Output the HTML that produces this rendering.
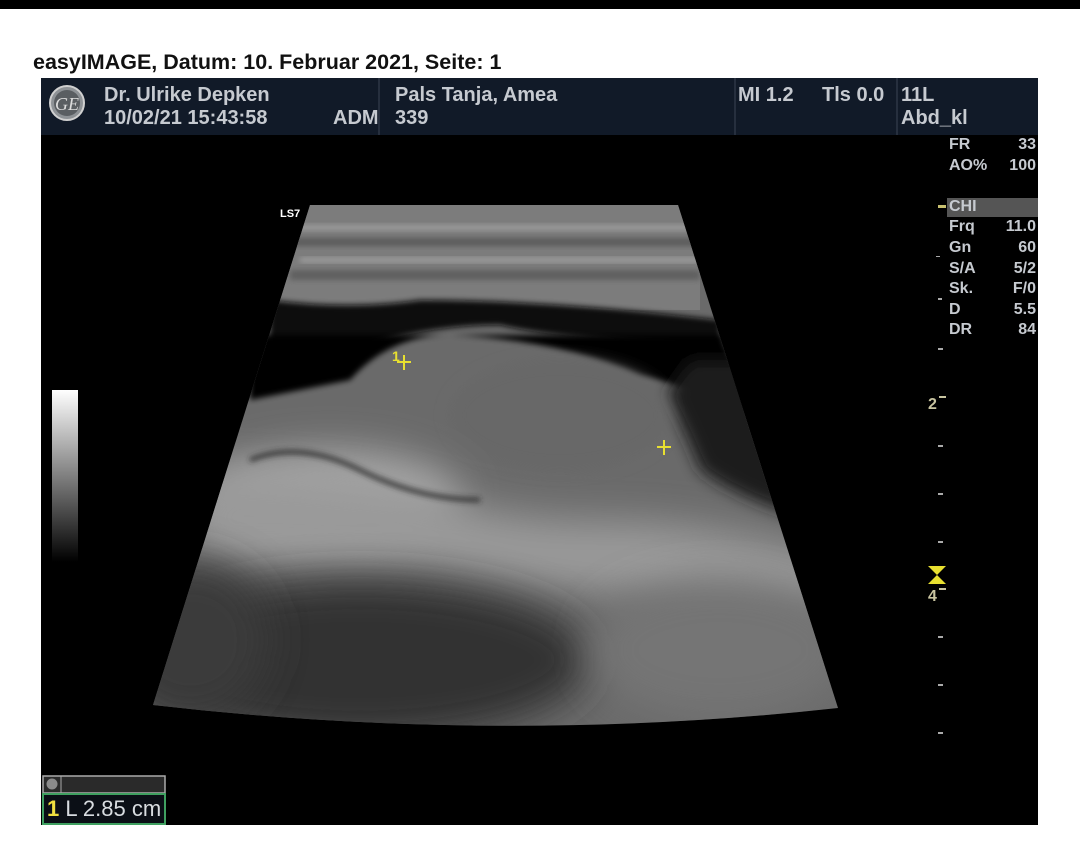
<!DOCTYPE html>
<html><head><meta charset="utf-8"><style>
html,body{margin:0;padding:0;background:#fff;}
body{width:1080px;height:854px;position:relative;overflow:hidden;font-family:"Liberation Sans",Arial,sans-serif;}
.t{position:absolute;white-space:nowrap;}
.h{font-size:20px;font-weight:bold;color:#c6cad0;line-height:23px}
</style></head><body>
<div style="position:absolute;left:0;top:0;width:1080px;height:9px;background:#000"></div>
<div class="t" style="left:33px;top:50px;font-size:21.5px;font-weight:bold;color:#111">easyIMAGE, Datum: 10. Februar 2021, Seite: 1</div>
<svg style="position:absolute;left:0;top:0" width="1080" height="854" xmlns="http://www.w3.org/2000/svg">
<defs>
<clipPath id="fan"><path d="M310,205 L678,205 L838,708 Q500,745 153,705 Z"/></clipPath>
<filter id="b8" x="-50%" y="-50%" width="200%" height="200%"><feGaussianBlur stdDeviation="8"/></filter>
<filter id="b3" x="-50%" y="-50%" width="200%" height="200%"><feGaussianBlur stdDeviation="3"/></filter>
<filter id="b20" x="-50%" y="-50%" width="200%" height="200%"><feGaussianBlur stdDeviation="20"/></filter>
<linearGradient id="gbar" x1="0" y1="0" x2="0" y2="1"><stop offset="0" stop-color="#fff"/><stop offset="1" stop-color="#000"/></linearGradient>
</defs>
<rect x="41" y="78" width="997" height="747" fill="#000"/>
<rect x="41" y="78" width="997" height="57" fill="#111a28"/>
<line x1="379" y1="78" x2="379" y2="135" stroke="#3a4454"/>
<line x1="735" y1="78" x2="735" y2="135" stroke="#3a4454"/>
<line x1="897" y1="78" x2="897" y2="135" stroke="#3a4454"/>
<circle cx="67" cy="103" r="17" fill="#8e9296" stroke="#d0d0d0" stroke-width="2"/>
<circle cx="67" cy="103" r="13" fill="#5a5e62"/>
<text x="67" y="110" font-family="Liberation Serif" font-style="italic" font-size="18" fill="#ddd" text-anchor="middle">GE</text>
<rect x="52" y="390" width="26" height="172" fill="url(#gbar)"/>
<g clip-path="url(#fan)">
<rect x="140" y="200" width="710" height="550" fill="#6a6a6a"/>
<rect x="280" y="200" width="420" height="110" fill="#7c7c7c"/>
<rect x="290" y="238" width="410" height="8" fill="#5a5a5a" filter="url(#b3)"/>
<rect x="290" y="270" width="410" height="10" fill="#5e5e5e" filter="url(#b3)"/>
<rect x="290" y="225" width="410" height="5" fill="#a0a0a0" filter="url(#b3)"/>
<rect x="300" y="258" width="400" height="4" fill="#a8a8a8" filter="url(#b3)"/>
<path d="M270,300 Q350,310 420,300 Q550,300 720,320 L720,345 Q560,340 500,325 Q400,325 300,370 L270,370Z" fill="#080808" filter="url(#b3)"/>
<path d="M250,335 L720,335 L760,420 Q700,390 640,375 Q560,340 450,335 Q390,335 350,380 L250,400Z" fill="#050505" filter="url(#b3)"/>
<path d="M690,360 L760,360 L810,520 Q740,500 700,470 Q680,420 665,395Z" fill="#1a1a1a" filter="url(#b8)"/>
<ellipse cx="560" cy="415" rx="110" ry="55" fill="#686868" filter="url(#b8)"/>
<ellipse cx="330" cy="500" rx="130" ry="50" fill="#a8a8a8" filter="url(#b20)"/>
<path d="M200,470 Q300,470 420,490 Q500,520 600,520 Q720,520 840,560 L840,610 Q600,600 420,570 Q300,560 180,560Z" fill="#9a9a9a" filter="url(#b20)"/>
<ellipse cx="360" cy="660" rx="230" ry="80" fill="#303030" filter="url(#b20)"/>
<ellipse cx="190" cy="640" rx="80" ry="80" fill="#3a3a3a" filter="url(#b20)"/>
<ellipse cx="720" cy="650" rx="130" ry="70" fill="#747474" filter="url(#b20)"/>
<path d="M250,460 Q300,440 360,470 Q420,500 480,500" stroke="#2a2a2a" stroke-width="4" fill="none" filter="url(#b3)"/>
</g>
<text x="280" y="217" font-size="11" font-weight="bold" fill="#fff">LS7</text>
<g stroke="#e8e030" stroke-width="2"><line x1="404" y1="355" x2="404" y2="370"/><line x1="397" y1="362" x2="411" y2="362"/><line x1="664" y1="440" x2="664" y2="455"/><line x1="657" y1="447" x2="671" y2="447"/></g>
<text x="392" y="361" font-size="14" font-weight="bold" fill="#e8e030">1</text>
<rect x="947" y="198" width="91" height="19" fill="#555"/>
<g fill="#aaa"><rect x="938" y="205" width="8" height="3" fill="#c8c070"/><rect x="936" y="256" width="4" height="1"/><rect x="938" y="298" width="4" height="2"/><rect x="938" y="348" width="5" height="2"/><rect x="938" y="445" width="5" height="2"/><rect x="938" y="493" width="5" height="2"/><rect x="938" y="541" width="5" height="2"/><rect x="938" y="636" width="5" height="2"/><rect x="938" y="684" width="5" height="2"/><rect x="938" y="732" width="5" height="2"/></g>
<text x="928" y="409" font-size="16" font-weight="bold" fill="#c8c4a0">2</text><rect x="939" y="396" width="7" height="2" fill="#c8c4a0"/>
<text x="928" y="601" font-size="16" font-weight="bold" fill="#c8c4a0">4</text><rect x="939" y="588" width="7" height="2" fill="#c8c4a0"/>
<path d="M928,566 L946,566 L937,575 Z M928,584 L946,584 L937,575 Z" fill="#e8e030"/>
<rect x="43" y="776" width="122" height="17" fill="#2a2a2a" stroke="#aaa" stroke-width="1.5"/>
<circle cx="52" cy="784" r="5.5" fill="#8a8a8a"/>
<line x1="61" y1="776" x2="61" y2="793" stroke="#aaa"/>
<rect x="43" y="794" width="122" height="30" fill="#0b0f16" stroke="#3fa060" stroke-width="2"/>
</svg>
<div class="t h" style="left:104px;top:84px">Dr. Ulrike Depken<br>10/02/21 15:43:58</div>
<div class="t h" style="left:333px;top:107px">ADM</div>
<div class="t h" style="left:395px;top:84px">Pals Tanja, Amea<br>339</div>
<div class="t h" style="left:738px;top:84px">MI 1.2</div>
<div class="t h" style="left:822px;top:84px">Tls 0.0</div>
<div class="t h" style="left:901px;top:84px">11L<br>Abd_kl</div>
<div style="position:absolute;left:949px;top:135px;width:87px;font-size:16px;font-weight:bold;color:#c6cad0;line-height:20.6px">
<div style="display:flex;justify-content:space-between"><span>FR</span><span>33</span></div>
<div style="display:flex;justify-content:space-between"><span>AO%</span><span>100</span></div>
<div>&nbsp;</div>
<div>CHI</div>
<div style="display:flex;justify-content:space-between"><span>Frq</span><span>11.0</span></div>
<div style="display:flex;justify-content:space-between"><span>Gn</span><span>60</span></div>
<div style="display:flex;justify-content:space-between"><span>S/A</span><span>5/2</span></div>
<div style="display:flex;justify-content:space-between"><span>Sk.</span><span>F/0</span></div>
<div style="display:flex;justify-content:space-between"><span>D</span><span>5.5</span></div>
<div style="display:flex;justify-content:space-between"><span>DR</span><span>84</span></div>
</div>
<div class="t" style="left:47px;top:796px;font-size:22px;color:#d8dce0"><span style="color:#f0e040;font-weight:bold">1</span> L 2.85 cm</div>
</body></html>
